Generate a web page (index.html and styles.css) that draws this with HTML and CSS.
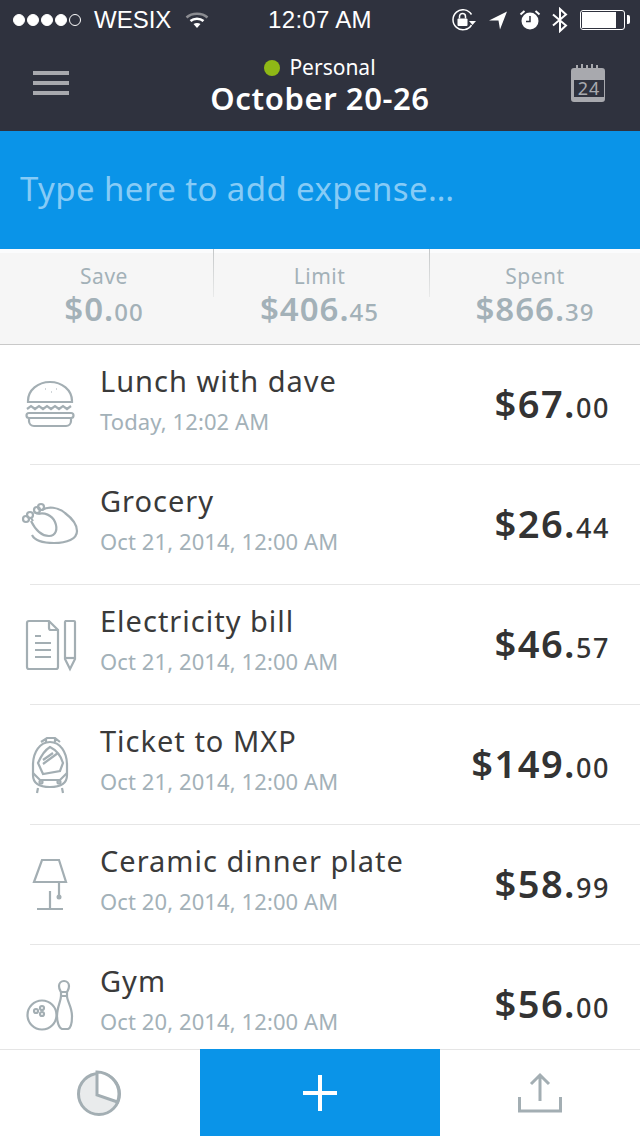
FILE: index.html
```html
<!DOCTYPE html>
<html lang="en">
<head>
<meta charset="utf-8">
<title>Expenses</title>
<link rel="stylesheet" href="styles.css">
</head>
<body>
<div class="app">
  <header class="top">
    <div class="status">
      <div class="status-left">
        <span class="dots"><i class="dot"></i><i class="dot"></i><i class="dot"></i><i class="dot"></i><i class="dot off"></i></span>
        <span class="carrier">WESIX</span>
        <svg class="wifi" width="24" height="20" viewBox="0 0 24 20"><path d="M1.500 7.500C7 2.500 17 2.500 22.500 7.500" fill="none" stroke="#8b8c91" stroke-width="2.500"/><path d="M5.500 11C9 8 15 8 18.500 11" fill="none" stroke="#fff" stroke-width="2.500"/><path d="M8.500 14C10.500 12.500 13.500 12.500 15.500 14L12 18Z" fill="#fff"/></svg>
      </div>
      <div class="clock">12:07 AM</div>
      <div class="status-right">
        <svg width="26" height="22" viewBox="0 0 26 22"><path d="M20.500 5.500A10 10 0 1 0 20.500 16" fill="none" stroke="#fff" stroke-width="1.500"/><rect x="6.500" y="9.500" width="10" height="7.500" rx="1" fill="#fff"/><path d="M8.500 9.500V7.500a3 3 0 0 1 6 0v2" fill="none" stroke="#fff" stroke-width="1.500"/><path d="M18 12h7l-3.500 4z" fill="#fff"/></svg>
        <svg class="arrow" width="20" height="20" viewBox="0 0 20 20"><path d="M1 10.500L19 1.500 12 19.500 10.500 10.500Z" fill="#fff"/></svg>
        <svg width="22" height="22" viewBox="0 0 22 22"><circle cx="11" cy="12" r="8.500" fill="#fff"/><path d="M11 7v5.500H7" fill="none" stroke="#2f323e" stroke-width="1.500"/><path d="M1.500 5.500L5.500 2M20.500 5.500L16.500 2" stroke="#fff" stroke-width="2" fill="none"/></svg>
        <svg width="16" height="26" viewBox="0 0 16 26"><path d="M1 7.500L14 18.500 8 24V2L14 7.500 1 18.500" fill="none" stroke="#fff" stroke-width="2"/></svg>
        <div class="battery"><div class="battery-level"></div></div>
      </div>
    </div>
    <div class="nav">
      <div class="menu"><i></i><i></i><i></i></div>
      <div class="title">
        <div class="account"><i class="live"></i>Personal</div>
        <div class="range">October 20-26</div>
      </div>
      <svg class="cal" width="36" height="38" viewBox="0 0 36 38">
        <path d="M3 4h2V1h2v3h3V0h2v4h3V1h2v3h3V0h2v4h3V1h2v3h4a3 3 0 0 1 3 3v28a3 3 0 0 1-3 3H3a3 3 0 0 1-3-3V7a3 3 0 0 1 3-3z" fill="#a8a9ae"/>
        <rect x="3" y="16" width="30" height="17" fill="#2f323e"/>
        <text x="18" y="31" class="cal-num" text-anchor="middle">24</text>
      </svg>
    </div>
  </header>

  <div class="entry">Type here to add expense…</div>

  <section class="summary">
    <div class="stat"><div class="stat-label">Save</div><div class="stat-value">$0.<small>00</small></div></div>
    <div class="stat"><div class="stat-label">Limit</div><div class="stat-value">$406.<small>45</small></div></div>
    <div class="stat"><div class="stat-label">Spent</div><div class="stat-value">$866.<small>39</small></div></div>
  </section>

  <main class="list">
    <div class="row">
      <svg class="ico" width="60" height="60" viewBox="0 0 60 60"><path d="M8 26C8 15 18 7 30 7s22 8 22 19v1H8z"/><path d="M7 34l4-3 4 3 4-3 4 3 4-3 4 3 4-3 4 3 4-3 4 3 4-3"/><path d="M9 38h42a2.500 2.500 0 0 1 0 5H9a2.500 2.500 0 0 1 0-5z"/><path d="M9 43v3a5 5 0 0 0 5 5h32a5 5 0 0 0 5-5v-3"/><path d="M25 14h.5M36 14h.5M31 17h.5" stroke-width="2"/></svg>
      <div class="info"><div class="name">Lunch with dave</div><div class="when">Today, 12:02 AM</div></div>
      <div class="amount">$67.<small>00</small></div>
    </div>
    <div class="row">
      <svg class="ico" width="60" height="60" viewBox="0 0 60 60"><path d="M22 15C28 11 38 12 45 18 53 24 57 30 57 36 57 44 47 48 34 48 24 48 15 46 12 40"/><path d="M18 19C24 17 32 20 35 27 38 34 36 41 29 41 22 41 16 36 11 26"/><circle cx="6" cy="24" r="3"/><circle cx="10" cy="20" r="3"/><circle cx="17" cy="15" r="3"/><circle cx="21" cy="12" r="3"/><path d="M11 23l2 3M14 17l4 2"/></svg>
      <div class="info"><div class="name">Grocery</div><div class="when">Oct 21, 2014, 12:00 AM</div></div>
      <div class="amount">$26.<small>44</small></div>
    </div>
    <div class="row">
      <svg class="ico" width="60" height="60" viewBox="0 0 60 60"><path d="M9 6h20l9 9v37a2 2 0 0 1-2 2H9a2 2 0 0 1-2-2V8a2 2 0 0 1 2-2z"/><path d="M29 6v7a2 2 0 0 0 2 2h7"/><path d="M15 21h6M15 28h16M15 35h16M15 42h16"/><path d="M45 6h9a1 1 0 0 1 1 1v37l-5 10-5-10V7a1 1 0 0 1 1-1z"/><path d="M44.500 43h10"/></svg>
      <div class="info"><div class="name">Electricity bill</div><div class="when">Oct 21, 2014, 12:00 AM</div></div>
      <div class="amount">$46.<small>57</small></div>
    </div>
    <div class="row">
      <svg class="ico" width="60" height="60" viewBox="0 0 60 60"><path d="M13 30C13 17 20 7 30 7s17 10 17 23v10c0 8-6 12-17 12s-17-4-17-12z"/><path d="M30 12C36 15 41 21 43 28L40 36 23 39 18 28C21 21 25 15 30 12z"/><path d="M13 38l7 7h20l7-7"/><path d="M21 7l6-4h8l5 4M26 7V3M35 7V3"/><path d="M23 25l10-7M23 29l15-11"/><circle cx="21" cy="47" r="1.500"/><circle cx="39" cy="47" r="1.500"/><path d="M18 53l-1 5M42 53l1 5"/></svg>
      <div class="info"><div class="name">Ticket to MXP</div><div class="when">Oct 21, 2014, 12:00 AM</div></div>
      <div class="amount">$149.<small>00</small></div>
    </div>
    <div class="row">
      <svg class="ico" width="60" height="60" viewBox="0 0 60 60"><path d="M22 5h17l7 22H14z"/><path d="M30 36v18M17 54h26M39 27v13"/><circle cx="39" cy="42" r="2.500" class="solid"/></svg>
      <div class="info"><div class="name">Ceramic dinner plate</div><div class="when">Oct 20, 2014, 12:00 AM</div></div>
      <div class="amount">$58.<small>99</small></div>
    </div>
    <div class="row">
      <svg class="ico" width="60" height="60" viewBox="0 0 60 60"><circle cx="22" cy="40" r="14.500"/><circle cx="16" cy="36" r="2"/><circle cx="22" cy="33" r="2"/><circle cx="22" cy="39" r="2"/><path d="M41 17c-1-2-2-3-2-6a5 5 0 0 1 10 0c0 3-1 4-2 6zM41 17v4c0 5-4 11-4 20 0 6 2 12 5 13h6c3-1 4-7 4-13 0-9-5-15-5-20v-4M41 21h6"/></svg>
      <div class="info"><div class="name">Gym</div><div class="when">Oct 20, 2014, 12:00 AM</div></div>
      <div class="amount">$56.<small>00</small></div>
    </div>
  </main>

  <nav class="tabs">
    <div class="tab">
      <svg width="46" height="46" viewBox="0 0 46 46"><circle cx="22" cy="24" r="20.500" fill="#e9ebec" stroke="#a3aeb3" stroke-width="3"/><path d="M20 2c11 0 22 9 22 22 0 3-.5 5-1.500 8L20 25z" fill="#fff" stroke="#a3aeb3" stroke-width="3"/></svg>
    </div>
    <div class="tab add">
      <svg width="36" height="36" viewBox="0 0 36 36"><path d="M18 0v36M1 18h34" stroke="#fff" stroke-width="4"/></svg>
    </div>
    <div class="tab">
      <svg width="46" height="42" viewBox="0 0 46 42"><path d="M23 3v26M14 12l9-9 9 9" fill="none" stroke="#a3aeb3" stroke-width="3"/><path d="M2.500 25v14h41V25" fill="none" stroke="#a3aeb3" stroke-width="3"/></svg>
    </div>
  </nav>
</div>
</body>
</html>
```
FILE: styles.css
```css
* { box-sizing: border-box; }
html, body { margin: 0; padding: 0; }
body { font-family: "Noto Sans", "Open Sans", sans-serif; background: #fff; }
.app { width: 640px; height: 1136px; display: flex; flex-direction: column; overflow: hidden; }

.top { background: #2f323e; height: 131px; color: #fff; flex: none; }
.status { height: 40px; display: grid; grid-template-columns: 1fr auto 1fr; align-items: center; font-family: "Liberation Sans", Arial, sans-serif; font-size: 24px; }
.status-left { display: flex; align-items: center; padding-left: 13px; }
.dots { display: flex; gap: 2px; margin-right: 13px; }
.dot { width: 12px; height: 12px; border-radius: 50%; background: #fff; border: 1px solid #fff; }
.dot.off { background: none; }
.carrier { margin-right: 14px; }
.wifi { display: block; }
.clock { text-align: center; letter-spacing: 0.3px; }
.status-right { display: flex; align-items: center; justify-content: flex-end; gap: 11px; padding-right: 15px; }
.battery { width: 45px; height: 20px; border: 1.5px solid #fff; border-radius: 3px; padding: 1px; position: relative; margin-left: 1px; }
.battery::after { content: ""; position: absolute; right: -6px; top: 4px; width: 3px; height: 9px; background: #fff; border-radius: 0 2px 2px 0; }
.battery-level { width: 34px; height: 100%; background: #fff; }

.nav { height: 91px; display: grid; grid-template-columns: 1fr auto 1fr; align-items: start; padding: 0 33px; }
.menu { display: flex; flex-direction: column; gap: 6px; margin-top: 31px; }
.menu i { display: block; width: 36px; height: 4px; background: #a8a9ae; }
.title { text-align: center; padding-top: 13px; }
.account { font-size: 21px; line-height: 29px; display: flex; align-items: center; justify-content: center; gap: 9px; }
.live { width: 16px; height: 16px; border-radius: 50%; background: #8fb816; }
.range { font-size: 31px; line-height: 32px; font-weight: 600; letter-spacing: 0.6px; }
.cal { justify-self: end; margin-top: 24px; }
.cal-num { font-size: 18px; fill: #a8a9ae; font-family: "Noto Sans", sans-serif; letter-spacing: 1px; }

.entry { height: 118px; background: #0a94e8; color: #86cbf6; font-size: 33px; line-height: 116px; padding-left: 20px; flex: none; letter-spacing: 0.4px; }

.summary { height: 96px; background: #f6f6f6; border-bottom: 1px solid #c9c9c9; box-shadow: inset 0 4px 0 #fbfcfd; display: grid; grid-template-columns: 214px 216px 1fr; flex: none; color: #a3b1b8; text-align: center; }
.stat { position: relative; padding-top: 13px; }
.stat:nth-child(1) { padding-right: 6px; }
.stat:nth-child(2) { padding-right: 5px; }
.stat + .stat::before { content: ""; position: absolute; left: -1px; top: 0; width: 1px; height: 48px; background: linear-gradient(#c4c7c8, #e9eaea); }
.stat-label { font-size: 21px; line-height: 28px; letter-spacing: 0.5px; }
.stat-value { font-size: 33px; line-height: 38px; font-weight: 600; letter-spacing: 1px; }
.stat-value small { font-size: 24px; font-weight: 500; letter-spacing: 1px; }

.list { flex: 1; min-height: 0; overflow: hidden; }
.row { height: 120px; display: flex; align-items: center; padding: 0 30px 0 20px; position: relative; gap: 20px; }
.row + .row::before { content: ""; position: absolute; left: 30px; right: 0; top: -1px; height: 1px; background: #e6e6e6; }
.ico { flex: none; fill: none; stroke: #a3aeb3; stroke-width: 2.2; }
.ico .solid { fill: #a3aeb3; stroke: none; }
.info { flex: 1; min-width: 0; padding-bottom: 8px; }
.name { font-size: 29px; line-height: 40px; color: #3a3a3a; letter-spacing: 1px; }
.when { font-size: 22px; line-height: 40px; color: #a3b1b8; letter-spacing: 0.1px; }
.amount { font-size: 38px; font-weight: 600; color: #333; letter-spacing: 1.5px; padding-bottom: 4px; }
.amount small { font-size: 27px; font-weight: 500; letter-spacing: 1.5px; }

.tabs { height: 87px; border-top: 1px solid #e5e5e5; display: grid; grid-template-columns: 200px 240px 200px; flex: none; background: #fff; }
.tab { display: flex; align-items: center; justify-content: center; }
.tab.add { background: #0a94e8; margin-top: -1px; }
```
